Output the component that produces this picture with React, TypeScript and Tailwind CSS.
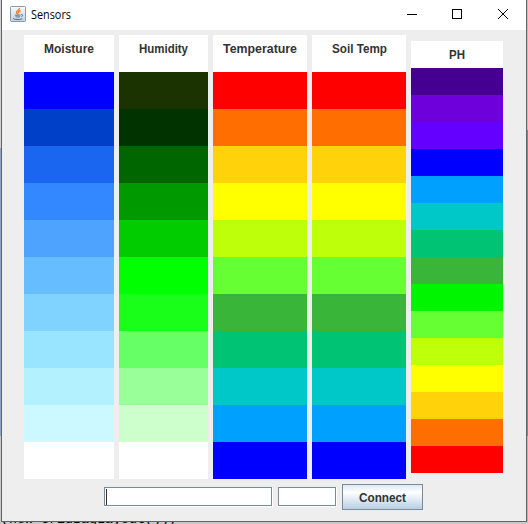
const moisture = ["#0000ff", "#0040c8", "#1a66f0", "#3388ff", "#4da3ff", "#66bdff", "#80d2ff", "#99e4ff", "#b3f1ff", "#ccf9ff", "#ffffff"];
const humidity = ["#1a3300", "#003300", "#006600", "#009900", "#00cc00", "#00ff00", "#1aff1a", "#66ff66", "#99ff99", "#ccffcc", "#ffffff"];
const temperature = ["#ff0000", "#ff6e00", "#ffd20a", "#ffff00", "#beff0a", "#66ff33", "#39b539", "#00c473", "#00c8c8", "#00a0ff", "#0000ff"];
const ph = ["#460091", "#6e00dc", "#6400ff", "#0000ff", "#00a0ff", "#00c8c8", "#00c473", "#39b539", "#00f500", "#66ff33", "#beff0a", "#ffff00", "#ffd20a", "#ff6e00", "#ff0000"];

type ScaleProps = { label: string; colors: string[]; width: string; labelWidth: number; compact?: boolean };

function Scale({ label, colors, width, labelWidth, compact = false }: ScaleProps) {
  const row = compact ? "h-[27px]" : "h-[37px]";
  return (
    <div className={`${width} shrink-0`}>
      <div className={`${row} flex justify-center bg-white ${compact ? "pt-[7px]" : "pt-[7px]"}`}>
        <svg width={labelWidth} height="15" className="overflow-visible">
          <text x="0" y="11" textLength={labelWidth} lengthAdjust="spacingAndGlyphs" fill="#333333" fontSize="12" fontWeight="bold">
            {label}
          </text>
        </svg>
      </div>
      {colors.map((c, i) => (
        <div key={i} className={row} style={{ backgroundColor: c }} />
      ))}
    </div>
  );
}

function JavaIcon() {
  return (
    <svg width="16" height="16" viewBox="0 0 16 16" fill="none">
      <defs>
        <linearGradient id="tile" x1="0" y1="0" x2="0" y2="1">
          <stop offset="0" stopColor="#fafbfc" />
          <stop offset="1" stopColor="#c2cfdb" />
        </linearGradient>
      </defs>
      <rect x="0.5" y="0.5" width="15" height="15" rx="1" fill="url(#tile)" stroke="#8799aa" />
      <path d="M9.500 2C10 4 6 4.500 6.500 6.500Q6.700 7.500 8 8.500M10.500 4.500C8 5.500 8 6.500 9 7.300" stroke="#ed7d24" strokeWidth="1.400" />
      <path d="M5 8.800Q4.500 9.600 10.500 9M5.500 10.700Q7 11.500 10 10.700M4 12Q2 13.500 8 13.500Q13 13.400 12 12.300M11.200 8.600Q14 8.500 11.500 10.800" stroke="#47718f" strokeWidth="1" />
    </svg>
  );
}

function TextField({ width, caret = false }: { width: string; caret?: boolean }) {
  return (
    <div className={`${width} h-5 shrink-0 border-b border-r border-white`}>
      <div className="h-[19px] border border-[#7a8a99] bg-white pl-px pt-px">
        {caret && <div className="h-4 w-px bg-[#333333]" />}
      </div>
    </div>
  );
}

export default function App() {
  return (
    <div className="flex h-[524px] w-[528px] flex-col overflow-hidden bg-[#c8c8c8] font-['Liberation_Sans',sans-serif]">
      <div className="flex h-[522px] shrink-0">
        <div className="flex w-px shrink-0 flex-col">
          <div className="h-[148px] bg-[#d0d0d0]" />
          <div className="h-[288px] bg-[#91a5c6]" />
        </div>
        <div className="flex w-[526px] shrink-0 flex-col border-x border-b border-[#646464] bg-[#eeeeee]">
          <header className="flex h-[30px] shrink-0 items-center bg-white pl-2">
            <div className="-mt-0.5"><JavaIcon /></div>
            <svg width="41" height="18" className="ml-[5px] overflow-visible">
              <text x="0" y="13" textLength="40" lengthAdjust="spacingAndGlyphs" fill="#000" fontSize="12" fontFamily="'Open Sans', sans-serif">Sensors</text>
            </svg>
            <svg width="103" height="14" className="ml-auto mr-4" fill="none" stroke="#000" shapeRendering="crispEdges">
              <path d="M0 6.500H10M45.500 1.500H54.500V10.500H45.500Z" />
              <path d="M91 1L101 11M101 1L91 11" shapeRendering="auto" />
            </svg>
          </header>
          <main className="flex items-start gap-[5px] pl-[22px] pt-[5px]">
            <Scale label="Moisture" colors={moisture} width="w-[90px]" labelWidth={50} />
            <Scale label="Humidity" colors={humidity} width="w-[89px]" labelWidth={49} />
            <Scale label="Temperature" colors={temperature} width="w-[94px]" labelWidth={74} />
            <Scale label="Soil Temp" colors={temperature} width="w-[94px]" labelWidth={55} />
            <div className="pt-1.5">
              <Scale label="PH" colors={ph} width="w-[92px]" labelWidth={16} compact />
            </div>
          </main>
          <footer className="flex items-center gap-[5px] pl-[102px] pt-[5px]">
            <TextField width="w-[169px]" caret />
            <TextField width="w-[59px]" />
            <button className="flex h-[26px] w-[81px] items-center justify-center border border-[#7a8a99] bg-gradient-to-b from-[#dde8f3] via-white via-30% to-[#b8cfe5]">
              <svg width="48" height="15" className="overflow-visible">
                <text x="0" y="12" textLength="47" lengthAdjust="spacingAndGlyphs" fill="#333333" fontSize="12" fontWeight="bold">Connect</text>
              </svg>
            </button>
          </footer>
        </div>
        <div className="flex w-px shrink-0 flex-col">
          <div className="h-[130px] bg-[#bebebe]" />
          <div className="h-[306px] bg-[#7588a8]" />
          <div className="h-[86px] bg-[#b4b4b4]" />
        </div>
      </div>
      {/* Editor line behind the window, only its bottom edge is visible */}
      <svg width="528" height="2" className="shrink-0 overflow-hidden">
        <text x="1" y="0.5" textLength="176" fill="#000" fontSize="13.33" fontFamily="'Liberation Mono', monospace">{"(new GridBagLayout());"}</text>
      </svg>
    </div>
  );
}
